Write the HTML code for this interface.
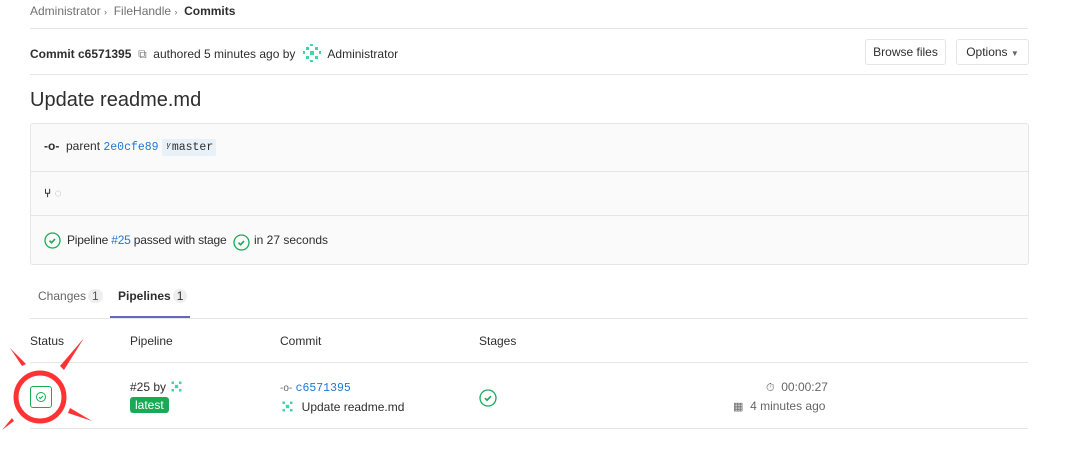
<!DOCTYPE html>
<html><head><meta charset="utf-8"><style>
*{box-sizing:border-box;margin:0;padding:0}
body{width:1067px;height:453px;background:#fff;font-family:"Liberation Sans",sans-serif;font-size:12px;color:#2e2e2e;position:relative;overflow:hidden}
.a{position:absolute;white-space:nowrap}
.hl{position:absolute;height:1px;background:#e5e5e5}
.mono{font-family:"Liberation Mono",monospace;font-size:11.5px}
.blue{color:#1f78d1}
.btn{position:absolute;border:1px solid #e5e5e5;border-radius:3px;background:#fff;font-size:12px;text-align:center;line-height:24px;height:26px}
.badge{display:inline-block;background:#eee;border-radius:8px;padding:0 4px;color:#555;margin-left:2px}
</style></head><body>
<div class="a" style="left:30px;top:4px;color:#707070">Administrator <span style="font-size:9px">›</span> &nbsp;FileHandle <span style="font-size:9px">›</span> &nbsp;<b style="color:#2e2e2e">Commits</b></div>
<div class="hl" style="left:30px;width:998px;top:28px"></div>
<div class="a" style="left:30px;top:44px"><b>Commit c6571395</b> &nbsp;<span style="color:#777">⧉</span> &nbsp;authored 5 minutes ago by
<svg width="18" height="18" viewBox="0 0 18 18" style="vertical-align:-4px;margin:0 4px"><g fill="#3ed6a6"><rect x="3" y="3" width="3" height="3"/><rect x="12" y="3" width="3" height="3"/><rect x="7" y="7" width="4" height="4"/><rect x="3" y="12" width="3" height="3"/><rect x="12" y="12" width="3" height="3"/><rect x="0" y="7" width="2" height="3"/><rect x="16" y="7" width="2" height="3"/><rect x="7" y="0" width="3" height="2"/><rect x="7" y="16" width="3" height="2"/></g></svg> Administrator</div>
<div class="btn" style="left:865px;top:39px;width:81px">Browse files</div>
<div class="btn" style="left:956px;top:39px;width:73px">Options <span style="font-size:8px;color:#666">▼</span></div>
<div class="hl" style="left:30px;width:998px;top:74px"></div>
<div class="a" style="left:30px;top:89px;font-size:20px">Update readme.md</div>
<div class="a" style="left:30px;top:123px;width:999px;height:142px;background:#fafafa;border:1px solid #e5e5e5;border-radius:3px"></div>
<div class="hl" style="left:31px;width:997px;top:171px"></div>
<div class="hl" style="left:31px;width:997px;top:215px"></div>
<div class="a" style="left:44px;top:139px"><b style="font-size:12px">-o-</b>&nbsp; parent <span class="mono blue">2e0cfe89</span> <span class="mono" style="background:#e8f1f8;padding:2px 3px;border-radius:2px"><i>ᵞ</i>master</span></div>
<div class="a" style="left:44px;top:186px;font-size:12px"><b>⑂</b> <span style="color:#aaa">◌</span></div>
<svg class="a" style="left:44px;top:232px" width="17" height="17"><circle cx="8.5" cy="8.5" r="7.5" fill="none" stroke="#1aaa55" stroke-width="1.3"/><path d="M5.5 8.7l2 2 3.5-3.6" fill="none" stroke="#1aaa55" stroke-width="1.6"/></svg>
<div class="a" style="left:67px;top:233px;letter-spacing:-0.2px">Pipeline <span class="blue">#25</span> passed with stage</div>
<svg class="a" style="left:233px;top:234px" width="17" height="17"><circle cx="8.5" cy="8.5" r="7.5" fill="none" stroke="#1aaa55" stroke-width="1.3"/><path d="M5.5 8.7l2 2 3.5-3.6" fill="none" stroke="#1aaa55" stroke-width="1.6"/></svg>
<div class="a" style="left:254px;top:233px">in 27 seconds</div>
<div class="a" style="left:38px;top:289px;color:#666">Changes<span class="badge">1</span></div>
<div class="a" style="left:118px;top:289px"><b style="font-weight:600">Pipelines</b><span class="badge" style="color:#2e2e2e">1</span></div>
<div class="hl" style="left:30px;width:998px;top:318px"></div>
<div class="a" style="left:110px;top:316px;width:80px;height:2px;background:#6666c4"></div>
<div class="a" style="left:30px;top:334px">Status</div>
<div class="a" style="left:130px;top:334px">Pipeline</div>
<div class="a" style="left:280px;top:334px">Commit</div>
<div class="a" style="left:479px;top:334px">Stages</div>
<div class="hl" style="left:30px;width:998px;top:362px"></div>
<div class="hl" style="left:30px;width:998px;top:428px"></div>
<div class="a" style="left:30px;top:386px;width:22px;height:22px;border:1px solid #1aaa55;border-radius:3px"></div>
<svg class="a" style="left:35px;top:391px" width="12" height="12"><circle cx="6" cy="6" r="4.5" fill="none" stroke="#1aaa55" stroke-width="1"/><path d="M4 6.2l1.4 1.3 2.4-2.5" fill="none" stroke="#1aaa55" stroke-width="1.1"/></svg>
<svg class="a" style="left:0;top:335px" width="100" height="100"><circle cx="40" cy="62" r="24" fill="none" stroke="#f33" stroke-width="5"/><g fill="#f33"><polygon points="10,13 26,29 22,31"/><polygon points="84,3 64,35 60,31"/><polygon points="70,73 92,86 68,78"/><polygon points="2,95 12,83 14,86"/></g></svg>
<div class="a" style="left:130px;top:379px">#25 by <svg width="15" height="15" viewBox="0 0 18 18" style="vertical-align:-3px"><g fill="#3ed6a6"><rect x="3" y="3" width="3" height="3"/><rect x="12" y="3" width="3" height="3"/><rect x="7" y="7" width="4" height="4"/><rect x="3" y="12" width="3" height="3"/><rect x="12" y="12" width="3" height="3"/></g></svg></div>
<div class="a" style="left:130px;top:397px;background:#1aaa55;color:#fff;border-radius:3px;padding:0 5px;line-height:16px">latest</div>
<div class="a" style="left:280px;top:380px"><span style="color:#666;font-size:10px">-o-</span> <span class="mono blue">c6571395</span></div>
<div class="a" style="left:280px;top:399px"><svg width="15" height="15" viewBox="0 0 18 18" style="vertical-align:-3px"><g fill="#3ed6a6"><rect x="3" y="3" width="3" height="3"/><rect x="12" y="3" width="3" height="3"/><rect x="7" y="7" width="4" height="4"/><rect x="3" y="12" width="3" height="3"/><rect x="12" y="12" width="3" height="3"/></g></svg> &nbsp;Update readme.md</div>
<svg class="a" style="left:479px;top:389px" width="18" height="18"><circle cx="9" cy="9" r="8" fill="none" stroke="#1aaa55" stroke-width="1.3"/><path d="M6 9.2l2 2 4-4" fill="none" stroke="#1aaa55" stroke-width="1.7"/></svg>
<div class="a" style="left:766px;top:380px;color:#666"><span style="font-size:11px">⏱</span> &nbsp;00:00:27</div>
<div class="a" style="left:733px;top:399px;color:#666"><span style="font-size:11px">▦</span> &nbsp;4 minutes ago</div>
</body></html>
